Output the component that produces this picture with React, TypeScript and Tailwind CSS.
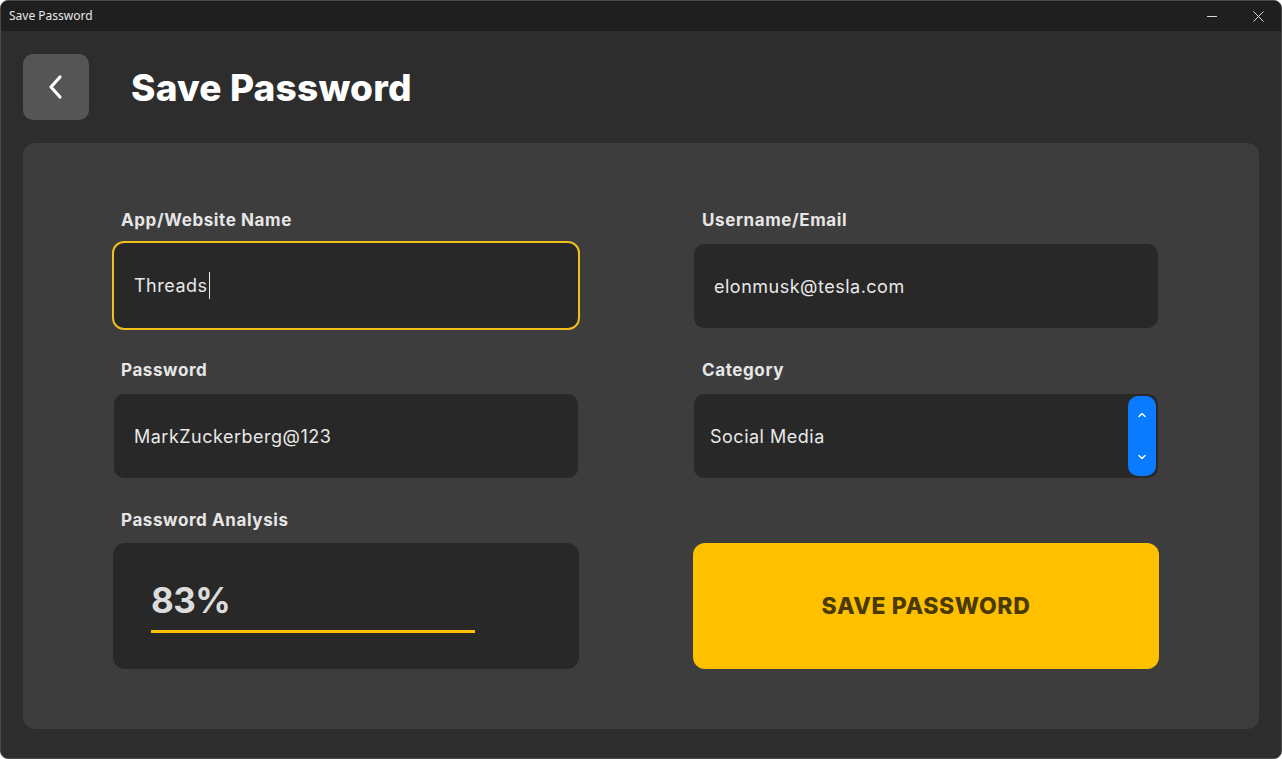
import React from "react";

const font = { fontFamily: "Inter, 'Noto Sans', sans-serif" };

function Label({ children }: { children: React.ReactNode }) {
  return (
    <div className="h-6 pl-2 text-[17px] font-bold leading-6 text-[#e6e6e6] tracking-[0.6px]">
      {children}
    </div>
  );
}

export default function App() {
  return (
    <div className="w-[1282px] h-[759px] bg-white" style={font}>
      <div className="w-full h-full rounded-[8px] overflow-hidden border border-[#4a4a4a] bg-[#2d2d2d] flex flex-col">
        {/* title bar */}
        <div className="h-[30px] bg-[#1f1f1f] flex items-center justify-between shrink-0">
          <span
            className="pl-2 text-[12px] text-[#e8e8e8]"
            style={{ fontFamily: "'Noto Sans', 'Open Sans', sans-serif" }}
          >
            Save Password
          </span>
          <div className="flex items-center h-full">
            <div className="w-[46px] h-full flex items-center justify-center">
              <div className="w-[10px] h-px bg-[#d8d8d8]" />
            </div>
            <div className="w-[46px] h-full flex items-center justify-center">
              <svg width="11" height="11" viewBox="0 0 11 11">
                <path d="M0.5 0.5 L10.5 10.5 M10.5 0.5 L0.5 10.5" stroke="#d8d8d8" strokeWidth="1" />
              </svg>
            </div>
          </div>
        </div>

        {/* header */}
        <div className="flex items-center pl-[22px] h-[112px] shrink-0">
          <div className="w-[66px] h-[66px] rounded-[10px] bg-[#555555] flex items-center justify-center">
            <svg width="16" height="26" viewBox="0 0 16 26">
              <path d="M12 3 L3 13 L12 23" fill="none" stroke="#ffffff" strokeWidth="3.2" strokeLinecap="round" strokeLinejoin="round" />
            </svg>
          </div>
          <h1 className="ml-[42px] text-[37px] font-extrabold text-white tracking-[0.2px] leading-none">
            Save Password
          </h1>
        </div>

        {/* panel */}
        <div className="mx-[22px] h-[586px] rounded-[12px] bg-[#3d3d3d] pl-[90px] pt-[65px]">
          <div className="grid grid-cols-[466px_464px] gap-x-[115px]">
            {/* row 1 */}
            <div className="flex flex-col">
              <Label>App/Website Name</Label>
              <div className="mt-[9px] -ml-px mr-[-1px] h-[89px] rounded-[12px] border-2 border-[#f0bf1a] bg-[#282828] flex items-center pl-[20px] text-[18px] tracking-[0.5px] text-[#e8e8e8]">
                <span>Threads</span>
                <span className="w-px h-[27px] bg-[#e8e8e8] ml-px" />
              </div>
            </div>
            <div className="flex flex-col">
              <Label>Username/Email</Label>
              <div className="mt-[12px] h-[84px] rounded-[10px] bg-[#282828] flex items-center pl-[20px] text-[18px] tracking-[0.5px] text-[#e8e8e8]">
                elonmusk@tesla.com
              </div>
            </div>

            {/* row 2 */}
            <div className="flex flex-col mt-[28px] px-px">
              <div className="-ml-px">
                <Label>Password</Label>
              </div>
              <div className="mt-[12px] h-[84px] rounded-[10px] bg-[#282828] flex items-center pl-[20px] text-[18px] tracking-[0.5px] text-[#e8e8e8]">
                MarkZuckerberg@123
              </div>
            </div>
            <div className="flex flex-col mt-[28px]">
              <Label>Category</Label>
              <div className="mt-[12px] h-[84px] rounded-[10px] bg-[#282828] flex items-center justify-between pl-[16px] pr-[2px] text-[18px] tracking-[0.5px] text-[#e8e8e8]">
                <span>Social Media</span>
                <div className="w-[28px] h-[80px] rounded-[10px] bg-[#0a7aff] flex flex-col items-center justify-between py-[16px]">
                  <svg width="8" height="6" viewBox="0 0 8 6">
                    <path d="M1 4.5 L4 1.5 L7 4.5" fill="none" stroke="#ffffff" strokeWidth="1.4" strokeLinecap="round" strokeLinejoin="round" />
                  </svg>
                  <svg width="8" height="6" viewBox="0 0 8 6">
                    <path d="M1 1.5 L4 4.5 L7 1.5" fill="none" stroke="#ffffff" strokeWidth="1.4" strokeLinecap="round" strokeLinejoin="round" />
                  </svg>
                </div>
              </div>
            </div>

            {/* row 3 */}
            <div className="flex flex-col mt-[30px]">
              <Label>Password Analysis</Label>
              <div className="mt-[11px] h-[126px] rounded-[12px] bg-[#282828] flex flex-col pl-[38px] pt-[37px]">
                <div className="text-[35px] font-bold leading-[40px] text-[#dcdcdc] tracking-[-0.5px]">83%</div>
                <div className="mt-[10px] w-[324px] h-[3px] bg-[#ffc000]" />
              </div>
            </div>
            <div className="flex flex-col mt-[30px]">
              <div className="h-6" />
              <div className="mt-[11px] -mx-px h-[126px] rounded-[12px] bg-[#ffc000] flex items-center justify-center text-[23px] font-extrabold text-[#4a3a00] tracking-[0.6px]">
                SAVE PASSWORD
              </div>
            </div>
          </div>
        </div>
      </div>
    </div>
  );
}
